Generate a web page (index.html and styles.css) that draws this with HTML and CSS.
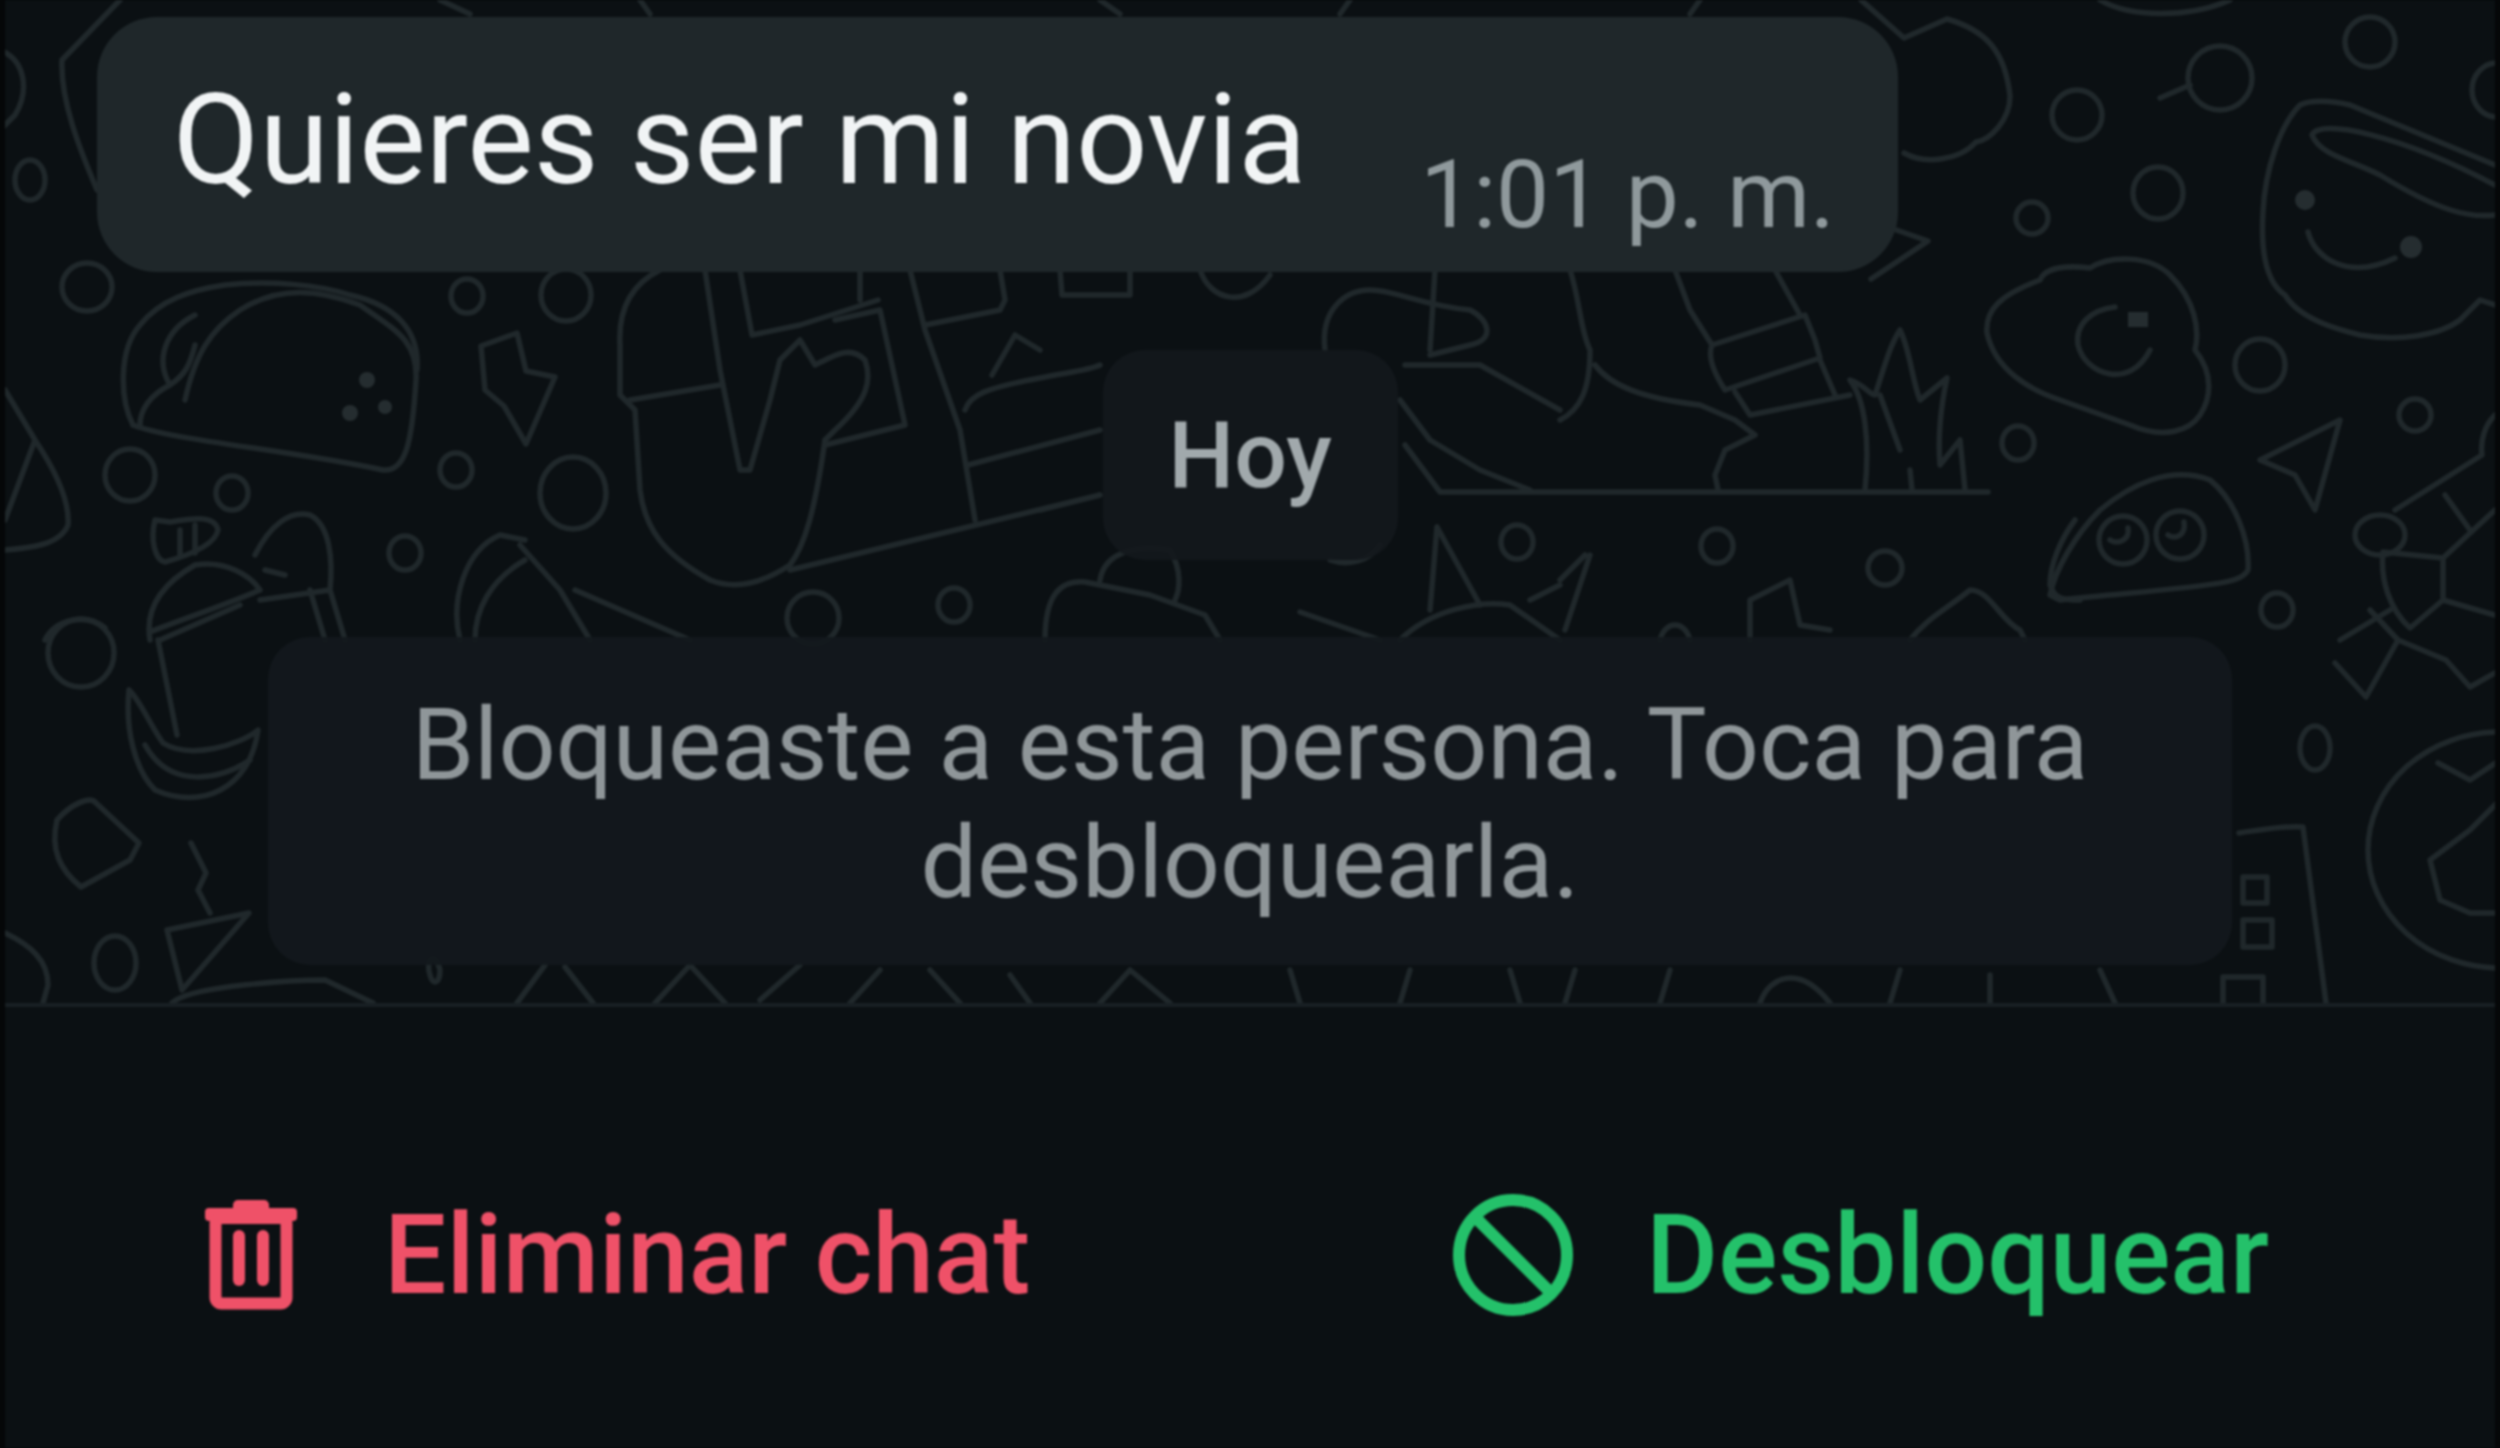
FILE: index.html
```html
<!DOCTYPE html>
<html lang="es">
<head>
	<meta charset="UTF-8">
	<title>Chat bloqueado</title>
	<link rel="stylesheet" href="styles.css">
</head>
<body>
<main class="screen">
	<section class="chat">
		<!-- doodle wallpaper, drawn in page pixels -->
		<svg class="wallpaper" viewBox="0 0 2490 1003" aria-hidden="true">
			<g transform="translate(-5 0)" fill="none">
				<!-- rings -->
				<ellipse cx="87" cy="287" rx="25" ry="24"/>
				<ellipse cx="130" cy="475" rx="25" ry="26"/>
				<ellipse cx="232" cy="493" rx="16" ry="17"/>
				<ellipse cx="467" cy="296" rx="16" ry="17"/>
				<ellipse cx="456" cy="470" rx="16" ry="17"/>
				<ellipse cx="405" cy="553" rx="16" ry="17"/>
				<ellipse cx="566" cy="295" rx="25" ry="26"/>
				<ellipse cx="573" cy="493" rx="33" ry="36"/>
				<ellipse cx="813" cy="618" rx="26" ry="26"/>
				<ellipse cx="954" cy="605" rx="16" ry="17"/>
				<ellipse cx="1517" cy="542" rx="16" ry="17"/>
				<ellipse cx="1717" cy="546" rx="16" ry="17"/>
				<ellipse cx="1885" cy="568" rx="17" ry="17"/>
				<ellipse cx="2018" cy="443" rx="16" ry="17"/>
				<ellipse cx="2370" cy="42" rx="25" ry="25"/>
				<ellipse cx="2220" cy="78" rx="32" ry="32"/>
				<ellipse cx="2077" cy="115" rx="25" ry="25"/>
				<ellipse cx="2158" cy="193" rx="25" ry="26"/>
				<ellipse cx="2032" cy="218" rx="16" ry="16"/>
				<ellipse cx="2260" cy="365" rx="25" ry="26"/>
				<ellipse cx="2415" cy="415" rx="16" ry="16"/>
				<ellipse cx="2277" cy="610" rx="16" ry="17"/>
				<ellipse cx="2497" cy="90" rx="25" ry="27"/>
				<ellipse cx="2315" cy="748" rx="15" ry="22"/>
				<ellipse cx="30" cy="180" rx="15" ry="20"/>
				<ellipse cx="81" cy="653" rx="33" ry="34"/>
				<ellipse cx="115" cy="963" rx="21" ry="27"/>
				<ellipse cx="1304" cy="120" rx="25" ry="25"/>
				<path d="M2160 98 2190 85"/>
				<!-- taco -->
				<path d="M133 425C170 440 290 450 383 470 405 472 412 445 416 380 418 340 395 330 360 305 320 290 280 285 240 310 210 330 195 355 185 400"/>
				<path d="M133 425C120 400 118 350 140 325 160 300 190 290 225 285 270 280 320 285 350 295 395 305 420 330 417 370"/>
				<path d="M195 315C165 330 155 360 170 385 150 395 140 410 140 425M170 385C185 375 190 365 195 345"/>
				<!-- half shape, left edge -->
				<path d="M5 390 35 440C55 470 70 500 68 525 60 545 30 548 5 550M35 440 5 520"/>
				<!-- bun, bag and bottle -->
				<path d="M155 520C150 540 155 560 165 562 190 555 215 545 218 530 215 515 195 518 170 522ZM180 530V556M195 525V553"/>
				<path d="M150 640C145 610 160 585 195 565 225 560 250 575 260 590 225 605 180 620 150 632"/>
				<path d="M255 555C270 525 290 510 310 515 330 525 333 560 330 590L260 600M265 570 285 575M310 590 325 640M330 590 345 640"/>
				<path d="M45 640C55 620 85 612 105 628"/>
				<path d="M460 640C450 600 465 550 500 535L525 540M475 640C475 610 490 580 525 560"/>
				<!-- bolt -->
				<path d="M481 346 517 333 526 371 555 377 526 444 504 406 485 390Z"/>
				<!-- big mitt -->
				<path d="M660 270C630 285 618 310 620 345V395L635 410 640 490C645 530 665 555 710 580 730 588 755 588 790 565 805 545 815 510 825 440"/>
				<path d="M630 400 720 385"/>
				<path d="M705 270 720 370 740 470 750 470 770 400 780 360 800 340 815 365C835 355 850 345 865 360 872 380 868 400 835 430L825 440"/>
				<path d="M825 445 905 425 880 310 835 320M740 270 752 335 800 325 878 300M860 270V300"/>
				<path d="M790 570 1100 495 1040 510"/>
				<path d="M910 270 925 330 960 430 975 520M925 325 1000 310 1005 300 1000 270M992 375 1015 335 1040 350M965 410C970 395 985 388 1040 378 1070 372 1090 370 1100 365M968 465 1100 430"/>
				<path d="M520 545 560 590 590 640M575 590 690 640"/>
				<!-- below the bubble, top middle -->
				<path d="M1060 270 1062 295H1130V270M1200 270C1210 300 1245 310 1270 275"/>
				<path d="M1325 350C1320 310 1345 290 1370 290 1395 290 1420 305 1470 310 1490 320 1495 340 1470 345L1430 355"/>
				<path d="M1435 270 1430 350M1405 365 1480 365 1560 410M1400 400 1430 440 1480 470 1530 490M1405 445 1440 492H1988"/>
				<path d="M1100 580C1105 550 1140 545 1170 550 1182 570 1180 590 1175 600M1045 640C1045 595 1060 580 1085 582L1150 595 1205 615 1220 640"/>
				<path d="M1437 527 1430 610M1437 527 1480 605M1400 640C1430 610 1480 600 1510 605L1560 640M1300 612 1380 640M1530 600 1560 585M1330 560C1350 567 1370 560 1380 545"/>
				<!-- foot and grass -->
				<path d="M1570 270C1580 300 1580 330 1590 350 1590 390 1580 410 1560 420M1595 365C1610 385 1640 398 1700 405L1735 420 1755 435 1725 450 1715 475 1718 490"/>
				<path d="M1675 270 1690 310 1712 345 1805 315 1815 340 1820 358 1725 390C1712 370 1708 355 1712 345M1735 392 1750 415 1850 395M1820 360 1835 395M1775 270 1800 315"/>
				<path d="M1865 490C1870 440 1865 400 1850 380 1865 385 1870 395 1875 395 1885 365 1890 345 1900 330 1910 350 1912 380 1920 400L1947 378C1940 410 1938 440 1940 465L1960 440 1965 490M1880 395 1900 450M1910 470 1912 490"/>
				<path d="M1585 555 1560 580M1590 555 1565 630M1750 640 1750 600 1790 580 1800 625 1830 630M1660 640C1665 620 1685 620 1690 640M1910 640C1925 620 1945 610 1970 590 1990 590 2000 620 2020 630L2025 640"/>
				<path d="M2075 520C2060 540 2050 565 2050 585 2055 600 2065 600 2080 600"/>
				<!-- cup -->
				<path d="M2495 165 2350 105C2330 100 2310 100 2300 105 2280 125 2265 170 2263 212 2260 260 2270 285 2285 295 2300 320 2340 330 2360 335 2400 342 2440 335 2460 320L2480 300 2495 305"/>
				<path d="M2495 215C2470 218 2440 212 2380 175 2350 160 2320 155 2312 135 2320 118 2400 135 2495 185"/>
				<path d="M2308 232C2315 260 2350 280 2395 258"/>
				<!-- egg -->
				<path d="M1987 333C1985 310 2000 295 2040 280 2045 268 2065 265 2090 268 2110 255 2150 255 2170 275 2195 300 2200 330 2195 350 2215 375 2210 400 2200 415 2190 430 2165 440 2130 425L2060 400C2030 390 1995 370 1987 333"/>
				<path d="M2115 307C2090 310 2075 325 2078 345 2085 375 2130 390 2150 350"/>
				<!-- blob with eyes -->
				<path d="M2050 595C2055 570 2075 535 2100 510 2130 485 2170 465 2210 480 2235 500 2250 540 2248 570 2240 585 2210 585 2060 600Z"/>
				<ellipse cx="2123" cy="540" rx="24" ry="24"/>
				<ellipse cx="2180" cy="535" rx="24" ry="24"/>
				<path d="M2110 540C2118 545 2130 540 2128 528M2168 535C2176 540 2186 535 2184 522"/>
				<path d="M2260 460 2340 420 2315 510 2295 475Z"/>
				<!-- creature on the right edge -->
				<path d="M2495 415C2485 425 2480 440 2482 455L2395 510M2445 495 2470 530M2495 510 2443 558M2383 552 2443 558V600L2495 615M2383 552C2380 580 2390 610 2410 628L2443 600M2390 610 2340 640"/>
				<ellipse cx="2380" cy="535" rx="25" ry="20"/>
				<!-- football and phone -->
				<ellipse cx="2500" cy="850" rx="132" ry="118"/>
				<path d="M2500 800 2470 830 2430 860 2440 900 2470 913H2500M2438 763 2470 780 2500 760M2335 663 2366 697 2398 640 2446 660 2470 687 2500 670M2398 640 2370 610"/>
				<path d="M2239 833C2260 830 2285 825 2303 827L2326 1003M2243 877H2267V903H2243ZM2243 920H2272V947H2243ZM2223 1003V977H2263V1003"/>
				<!-- left column -->
				<path d="M120 0 62 60C60 100 80 150 97 190M0 50C25 60 30 90 15 115L0 130"/>
				<path d="M158 640 177 735M160 640 240 605M129 690C125 730 135 770 155 790 200 810 250 790 258 730 240 745 190 760 163 743 150 725 140 700 129 690M145 745C170 790 220 780 250 760"/>
				<path d="M57 820C70 805 90 795 96 803L139 843 130 860 81 887C60 870 50 850 57 820"/>
				<path d="M191 843 206 873 198 890 210 913"/>
				<path d="M167 930 249 913 182 990ZM5 933C30 945 48 960 48 985L43 1003M172 1003C190 985 300 980 325 980L373 1003"/>
				<path d="M430 975C425 960 435 950 440 970 440 985 432 985 430 975M517 1003 545 965M565 967 593 1003M655 1003 690 965 725 1003M760 1000 800 965M850 1003 880 970M930 970 960 1003M1010 975 1030 1003M1100 1003 1130 970 1170 1003M1290 970 1300 1003M1400 1003 1410 970M1510 970 1520 1003M1565 1003 1575 970M1660 1003 1670 970M1760 1003C1770 975 1800 965 1830 1003M1890 1003 1900 970M1990 1003V975M2100 970 2115 1003"/>
				<!-- right of the bubble -->
				<path d="M1861 0 1904 38 1947 19C1985 30 2005 50 2010 96 2010 120 1990 140 1976 142 1960 160 1925 165 1904 153"/>
				<path d="M1885 226 1928 241 1871 279"/>
				<path d="M2100 0C2130 18 2190 18 2230 0"/>
				<path d="M1700 0 1690 14M1350 0 1340 14M640 0 650 14M440 0 470 14M1100 0 1120 14"/>
			</g>
			<g transform="translate(-5 0)" class="wallpaper-dots">
				<circle cx="367" cy="380" r="8"/>
				<circle cx="385" cy="407" r="7"/>
				<circle cx="350" cy="413" r="8"/>
				<circle cx="2305" cy="200" r="10"/>
				<circle cx="2411" cy="247" r="11"/>
				<rect x="2128" y="312" width="20" height="15"/>
			</g>
		</svg>

		<div class="bubble">
			<span class="bubble-text">Quieres ser mi novia</span>
			<span class="bubble-time">1:01 p. m.</span>
		</div>
		<div class="date-pill">Hoy</div>
		<div class="notice">Bloqueaste a esta persona. Toca para<br>desbloquearla.</div>
	</section>

	<footer class="actions">
		<button class="action action-delete" type="button">
			<svg class="icon-trash" viewBox="0 0 92 110">
				<rect x="28" y="0" width="36" height="14" rx="5" class="icon-fill"/>
				<rect x="0" y="8" width="92" height="13" rx="4" class="icon-fill"/>
				<rect x="10.5" y="18" width="71" height="85.5" rx="6" class="icon-line"/>
				<rect x="28" y="30" width="12" height="56" rx="6" class="icon-fill"/>
				<rect x="52" y="30" width="12" height="56" rx="6" class="icon-fill"/>
			</svg>
			Eliminar chat
		</button>
		<button class="action action-unblock" type="button">
			<svg class="icon-ban" viewBox="0 0 120 122">
				<ellipse cx="60" cy="61" rx="54" ry="55" class="icon-line"/>
				<path d="M23 24 97 98" class="icon-line"/>
			</svg>
			Desbloquear
		</button>
	</footer>
</main>
</body>
</html>
```

FILE: styles.css
```css
html, body{
	margin: 0;
	height: 100%;
	background: #050708;
	font-family: Roboto, "Liberation Sans", sans-serif;
}

/* the source is an upscaled phone video, everything is a little soft */
.screen{
	display: flex;
	flex-direction: column;
	height: 1448px;
	padding: 0 5px;
	box-sizing: border-box;
	overflow: hidden;
	filter: blur(0.9px);
}

.chat{
	position: relative;
	display: flex;
	flex-direction: column;
	align-items: center;
	flex: none;
	height: 1003px;
	padding-top: 17px;
	box-sizing: border-box;
	background: #0b1013;
	overflow: hidden;
}

/* wallpaper sits under the messages */
.wallpaper{
	position: absolute;
	left: 0;
	top: 0;
	width: 2490px;
	height: 1003px;
	stroke: #20282b;
	stroke-width: 5.5;
	stroke-linecap: round;
	stroke-linejoin: round;
}
.wallpaper-dots{
	fill: #252d30;
	stroke: none;
}

.bubble{
	position: relative;
	display: flex;
	align-self: flex-start;
	justify-content: space-between;
	margin-left: 92px;
	width: 1801px;
	height: 255px;
	padding: 0 63px 0 76px;
	box-sizing: border-box;
	background: #1f272a;
	border-radius: 60px;
}
.bubble-text{
	margin-top: 53px;
	color: #f1f4f5;
	font-size: 125.6px;
	line-height: 140px;
}
.bubble-time{
	margin-top: 118px;
	color: #8f999c;
	font-size: 94.5px;
	line-height: 120px;
}

.date-pill{
	position: relative;
	display: flex;
	align-items: center;
	justify-content: center;
	margin-top: 78px;
	width: 295px;
	height: 210px;
	background: rgba(19, 24, 28, 0.92);
	border-radius: 42px;
	color: #a1a9ac;
	font-size: 93px;
	font-weight: 500;
}

.notice{
	position: relative;
	margin-top: 77px;
	width: 1964px;
	height: 328px;
	padding-top: 49px;
	box-sizing: border-box;
	background: rgba(19, 24, 28, 0.95);
	border-radius: 42px;
	color: #8f9699;
	font-size: 100.3px;
	line-height: 118px;
	text-align: center;
}

.actions{
	display: flex;
	flex: 1;
	align-items: center;
	justify-content: space-between;
	padding: 54px 226px 0 200px;
	background: #0b1013;
	border-top: 4px solid #181f23;
}

.action{
	display: flex;
	align-items: center;
	padding: 0;
	background: none;
	border: 0;
	font: 500 110.5px Roboto, "Liberation Sans", sans-serif;
}
.action-delete{
	color: #ef5168;
}
.action-unblock{
	color: #24c16a;
}

.icon-trash{
	width: 92px;
	height: 110px;
	margin-right: 87px;
}
.icon-ban{
	width: 120px;
	height: 122px;
	margin-right: 73px;
}
.icon-fill{
	fill: currentColor;
}
.icon-line{
	fill: none;
	stroke: currentColor;
	stroke-width: 12;
}
```
